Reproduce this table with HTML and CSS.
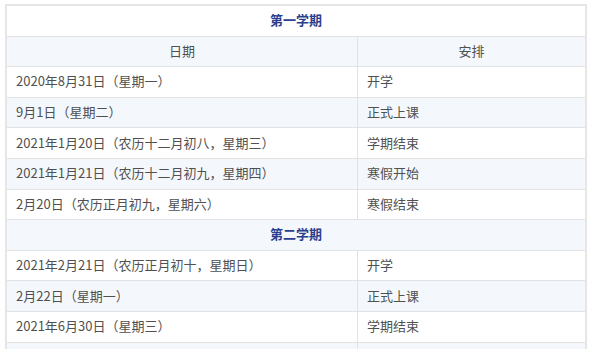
FILE: index.html
```html
<!DOCTYPE html>
<html lang="zh-CN">
<head>
<meta charset="utf-8">
<link rel="stylesheet" href="styles.css">
</head>
<body>
<table class="schedule">
  <tbody>
    <tr class="term"><th colspan="2">第一学期</th></tr>
    <tr class="head"><td class="c-date">日期</td><td class="c-plan">安排</td></tr>
    <tr><td>2020年8月31日（星期一）</td><td>开学</td></tr>
    <tr><td>9月1日（星期二）</td><td>正式上课</td></tr>
    <tr><td>2021年1月20日（农历十二月初八，星期三）</td><td>学期结束</td></tr>
    <tr><td>2021年1月21日（农历十二月初九，星期四）</td><td>寒假开始</td></tr>
    <tr><td>2月20日（农历正月初九，星期六）</td><td>寒假结束</td></tr>
    <tr class="term"><th colspan="2">第二学期</th></tr>
    <tr><td>2021年2月21日（农历正月初十，星期日）</td><td>开学</td></tr>
    <tr><td>2月22日（星期一）</td><td>正式上课</td></tr>
    <tr><td>2021年6月30日（星期三）</td><td>学期结束</td></tr>
    <tr><td>2021年7月1日（星期四）</td><td>暑假开始</td></tr>
  </tbody>
</table>
</body>
</html>
```
FILE: styles.css
```css
html, body {
  margin: 0;
  padding: 0;
  background: #ffffff;
}
body {
  padding: 4px 0 0 5px;
  font-family: "Noto Sans CJK SC", "Noto Sans", sans-serif;
  font-size: 13px;
  color: #505050;
}
.schedule {
  width: 582px;
  border-collapse: collapse;
  border: 2px solid #e6e6e6;
}
.schedule tr:nth-child(even) {
  background: #f4f8fc;
}
.schedule td,
.schedule th {
  height: 28.6px;
  padding: 0 9px 1px;
  border: 1px solid #e2e2e2;
  line-height: 16px;
  text-align: left;
  vertical-align: middle;
}
.schedule td:first-child {
  width: 332px;
}
.schedule th {
  text-align: center;
  font-weight: bold;
  color: #2c3f8c;
}
.schedule .head td {
  text-align: center;
}
```
